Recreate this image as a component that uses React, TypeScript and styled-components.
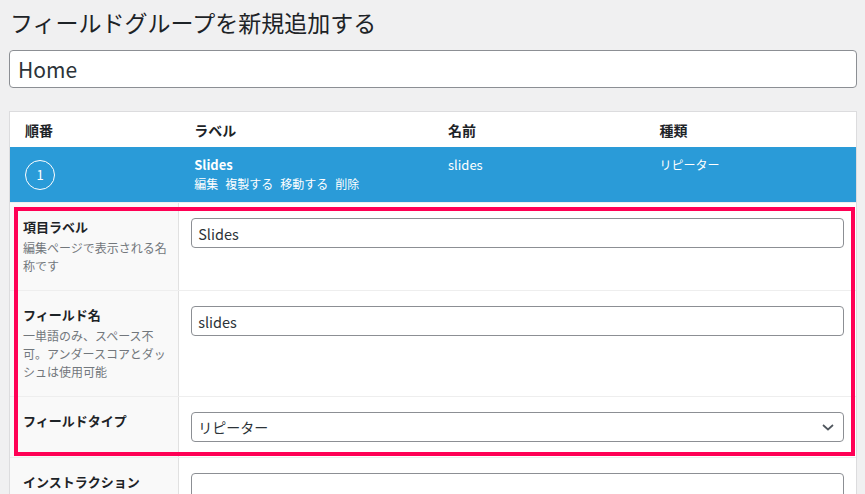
import React from "react";
import styled, { createGlobalStyle } from "styled-components";

const GlobalStyle = createGlobalStyle`
  html, body {
    margin: 0;
    padding: 0;
    overflow: hidden;
    background: #f0f0f1;
  }
  body {
    font-family: "Noto Sans CJK JP", "Noto Sans", sans-serif;
    color: #1d2327;
  }
  * { box-sizing: border-box; }
`;

const Page = styled.div`
  padding: 7px 8px 0 9px;
`;

const Title = styled.h1`
  margin: 0 0 13px 1px;
  font-size: 23px;
  line-height: 30px;
  font-weight: 400;
  color: #1d2327;
`;

const TitleInput = styled.input`
  display: block;
  width: 100%;
  height: 38px;
  margin: 0 0 23px;
  padding: 0 8px;
  border: 1px solid #8c8f94;
  border-radius: 4px;
  background: #fff;
  font-family: inherit;
  font-size: 21px;
  color: #2c3338;
  outline: none;
`;

const Panel = styled.div`
  background: #fff;
  border: 1px solid #dcdcde;
  border-bottom: none;
`;

const Columns = styled.div`
  display: grid;
  grid-template-columns: 20% 30% 25% 25%;
`;

const ListHeader = styled(Columns)`
  height: 35px;
  align-items: center;
`;

const HeadCell = styled.div`
  padding: 0 15px;
  font-size: 14px;
  font-weight: 700;
  line-height: 18px;
  color: #1d2327;
`;

const FieldRow = styled(Columns)`
  background: #2a9bd8;
  color: #fff;
  padding: 9px 0 9px;
`;

const Cell = styled.div<{ $center?: boolean }>`
  padding: 0 15px;
  display: flex;
  flex-direction: column;
  justify-content: ${(p) => (p.$center ? "center" : "flex-start")};
  font-size: 13px;
  line-height: 18px;
`;

const Circle = styled.span`
  display: flex;
  align-items: center;
  justify-content: center;
  width: 30px;
  height: 30px;
  border: 1px solid #fff;
  border-radius: 50%;
  font-size: 13px;
  line-height: 1;
`;

const FieldLabel = styled.strong`
  font-weight: 700;
  font-size: 13px;
`;

const RowActions = styled.div`
  display: flex;
  gap: 7px;
  font-size: 12px;
  line-height: 19px;
`;

const Action = styled.span`
  color: #fff;
`;

const TypeText = styled.span`
  font-size: 12px;
`;

const Settings = styled.div`
  display: flex;
  flex-direction: column;
`;

const Highlight = styled.div`
  position: relative;
  &::after {
    content: "";
    position: absolute;
    top: 5px;
    right: 1px;
    bottom: 1px;
    left: 4px;
    border: 4px solid #ff0055;
    pointer-events: none;
  }
`;

const SettingRow = styled.div`
  display: grid;
  grid-template-columns: 20% 1fr;
  border-top: 1px solid #eeeeee;
`;

const LabelCell = styled.div`
  background: #f9f9f9;
  border-right: 1px solid #e1e1e1;
  padding: 15px 9px 15px 13px;
`;

const InputCell = styled.div`
  padding: 15px 12px;
`;

const SettingLabel = styled.div`
  font-size: 13px;
  font-weight: 700;
  line-height: 18px;
  color: #1d2327;
`;

const Description = styled.div`
  margin-top: 3px;
  font-size: 12px;
  line-height: 18px;
  color: #72777c;
`;

const TextInput = styled.input`
  display: block;
  width: 100%;
  height: 30px;
  padding: 0 6px;
  border: 1px solid #8c8f94;
  border-radius: 4px;
  background: #fff;
  font-family: inherit;
  font-size: 14.5px;
  color: #2c3338;
  outline: none;
`;

const TextArea = styled.textarea`
  display: block;
  width: 100%;
  height: 80px;
  padding: 6px;
  border: 1px solid #8c8f94;
  border-radius: 4px;
  background: #fff;
  font-family: inherit;
  font-size: 14px;
  resize: none;
  outline: none;
`;

const SelectBox = styled.div`
  position: relative;
  display: flex;
  align-items: center;
  height: 30px;
  padding: 0 30px 0 6px;
  border: 1px solid #8c8f94;
  border-radius: 4px;
  background: #fff;
  font-size: 14px;
  color: #2c3338;
`;

const Chevron = styled.svg`
  position: absolute;
  right: 9px;
  top: 50%;
  margin-top: -3px;
`;

export default function App() {
  return (
    <>
      <GlobalStyle />
      <Page>
        <Title>フィールドグループを新規追加する</Title>
        <TitleInput defaultValue="Home" readOnly />
        <Panel>
          <ListHeader>
            <HeadCell>順番</HeadCell>
            <HeadCell>ラベル</HeadCell>
            <HeadCell>名前</HeadCell>
            <HeadCell>種類</HeadCell>
          </ListHeader>
          <FieldRow>
            <Cell $center>
              <Circle>1</Circle>
            </Cell>
            <Cell>
              <FieldLabel>Slides</FieldLabel>
              <RowActions>
                <Action>編集</Action>
                <Action>複製する</Action>
                <Action>移動する</Action>
                <Action>削除</Action>
              </RowActions>
            </Cell>
            <Cell>slides</Cell>
            <Cell>
              <TypeText>リピーター</TypeText>
            </Cell>
          </FieldRow>
          <Settings>
            <Highlight>
              <SettingRow>
                <LabelCell>
                  <SettingLabel>項目ラベル</SettingLabel>
                  <Description>編集ページで表示される名称です</Description>
                </LabelCell>
                <InputCell>
                  <TextInput defaultValue="Slides" readOnly />
                </InputCell>
              </SettingRow>
              <SettingRow>
                <LabelCell>
                  <SettingLabel>フィールド名</SettingLabel>
                  <Description>
                    一単語のみ、スペース不可。アンダースコアとダッシュは使用可能
                  </Description>
                </LabelCell>
                <InputCell>
                  <TextInput defaultValue="slides" readOnly />
                </InputCell>
              </SettingRow>
              <SettingRow>
                <LabelCell>
                  <SettingLabel>フィールドタイプ</SettingLabel>
                </LabelCell>
                <InputCell>
                  <SelectBox>
                    リピーター
                    <Chevron width="12" height="7" viewBox="0 0 12 7">
                      <polyline
                        points="1,1 6,5.5 11,1"
                        fill="none"
                        stroke="#50575e"
                        strokeWidth="1.7"
                      />
                    </Chevron>
                  </SelectBox>
                </InputCell>
              </SettingRow>
            </Highlight>
            <SettingRow>
              <LabelCell>
                <SettingLabel>インストラクション</SettingLabel>
              </LabelCell>
              <InputCell>
                <TextArea readOnly />
              </InputCell>
            </SettingRow>
          </Settings>
        </Panel>
      </Page>
    </>
  );
}
